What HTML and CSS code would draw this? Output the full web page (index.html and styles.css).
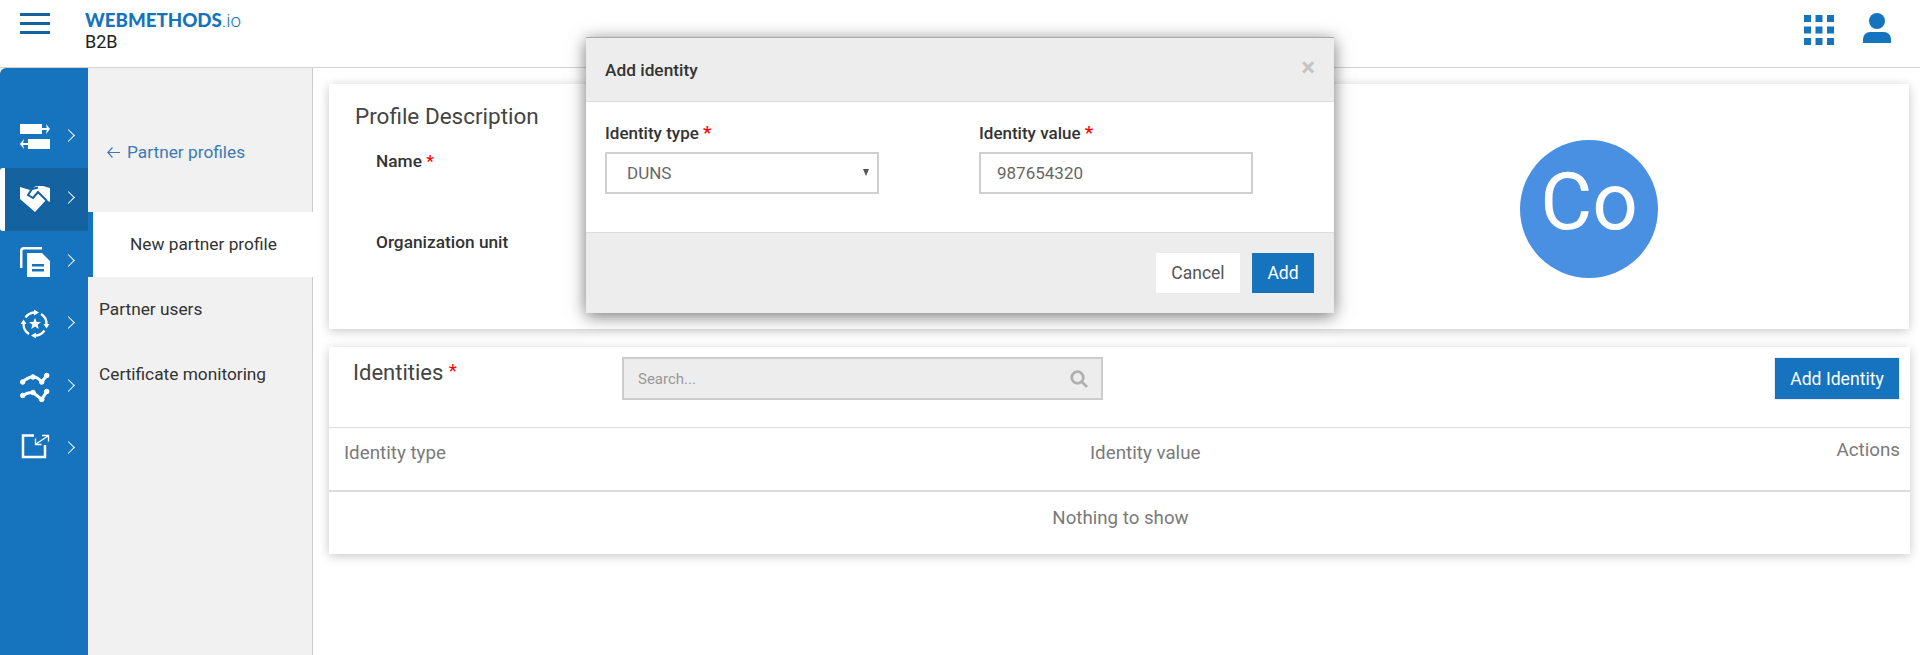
FILE: index.html
```html
<!DOCTYPE html>
<html>
<head>
  <meta name="viewport" content="width=device-width, initial-scale=1.0"/>
  <title>Add identity</title>
  <link rel="stylesheet" href="styles.css">
</head>
<body>
  <!--top bar-->
  <header class="topbar">
    <div class="burger"><span></span><span></span><span></span></div>
    <div class="brand">
      <div class="logo">WEBMETHODS<span class="logo-io">.io</span></div>
      <div class="product">B2B</div>
    </div>
    <div class="top-icons">
      <svg width="30" height="30" viewBox="0 0 30 30" fill="#1673bd">
        <rect x="0" y="0" width="7" height="7"/><rect x="11.5" y="0" width="7" height="7"/><rect x="23" y="0" width="7" height="7"/>
        <rect x="0" y="11.5" width="7" height="7"/><rect x="11.5" y="11.5" width="7" height="7"/><rect x="23" y="11.5" width="7" height="7"/>
        <rect x="0" y="23" width="7" height="7"/><rect x="11.5" y="23" width="7" height="7"/><rect x="23" y="23" width="7" height="7"/>
      </svg>
      <svg class="user-icon" width="28" height="31" viewBox="0 0 28 31" fill="#1673bd">
        <circle cx="14" cy="8" r="8"/>
        <path d="M0 30v-4a7 7 0 0 1 7-7h14a7 7 0 0 1 7 7v4z"/>
      </svg>
    </div>
  </header>

  <div class="layout">
    <!--icon rail-->
    <nav class="rail">
      <a class="rail-item">
        <svg class="up3" width="30" height="30" viewBox="0 0 30 30" fill="#fff">
          <rect x="0" y="4" width="22" height="10"/><path d="M22 8h5v2h-5zM26 4l4 5-4 5 1-5z"/>
          <rect x="8" y="19" width="22" height="10"/><path d="M8 23H3v2h5zM4 19l-4 5 4 5-1-5z"/>
        </svg>
        <span class="chev"></span>
      </a>
      <a class="rail-item active">
        <svg width="30" height="30" viewBox="0 0 30 30">
          <path fill="#fff" d="M0 3L10 6 16 2 23 2 30 4V18L26 16 15 28 0 15z"/>
          <path fill="none" stroke="#14629f" stroke-width="2" d="M18 3.500L12 5 8 11 13 14 18 8 27 17"/>
        </svg>
        <span class="chev"></span>
      </a>
      <a class="rail-item">
        <svg width="30" height="30" viewBox="0 0 30 30" fill="#fff">
          <path d="M2.500 21H0V4a4 4 0 0 1 4-4h18v2.500H4a1.500 1.500 0 0 0-1.500 1.500z"/>
          <path fill-rule="evenodd" d="M7 6h15l8 8v16H7zM12 17v2.500h12V17zM12 22v2.500h12V22z"/>
        </svg>
        <span class="chev"></span>
      </a>
      <a class="rail-item">
        <svg width="30" height="30" viewBox="0 0 30 30" fill="none" stroke="#fff" stroke-width="2.300">
          <path d="M5.500 8.500A11.500 11.500 0 0 1 14 3.500"/>
          <path d="M21 5A11.500 11.500 0 0 1 26.500 15"/>
          <path d="M24.500 21.500A11.500 11.500 0 0 1 16 26.500"/>
          <path d="M9 25A11.500 11.500 0 0 1 3.500 15"/>
          <path fill="#fff" stroke="none" d="M19 3.500L14 .5v6zM26.500 19.500L23.500 15h6zM11 26.500l5-3v6zM3.500 10.500L.5 15h6z"/>
          <path fill="#fff" stroke="none" d="M15 9l1.700 4 4.300.1-3.400 2.700 1.200 4.200-3.800-2.400-3.800 2.400 1.200-4.200-3.400-2.700 4.300-.1z"/>
        </svg>
        <span class="chev"></span>
      </a>
      <a class="rail-item">
        <svg width="30" height="30" viewBox="0 0 30 30" fill="#fff" stroke="#fff">
          <path fill="none" stroke-width="3" d="M2.700 10Q8 5 13 5T21.700 10L26.700 3.500M2.700 23.500Q8 20 13 20.500L21.700 27.500 26.700 19.500"/>
          <circle cx="2.700" cy="10" r="2.300"/><circle cx="13" cy="5" r="2.300"/><circle cx="21.700" cy="10" r="2.300"/><circle cx="26.700" cy="3.500" r="2.300"/>
          <circle cx="2.700" cy="23.500" r="2.300"/><circle cx="13" cy="20.500" r="2.300"/><circle cx="21.700" cy="27.500" r="2.300"/><circle cx="26.700" cy="19.500" r="2.300"/>
        </svg>
        <span class="chev"></span>
      </a>
      <a class="rail-item">
        <svg width="30" height="30" viewBox="0 0 30 30" fill="none" stroke="#fff" stroke-width="2.500">
          <path d="M14 1.500H3V23H25V11"/>
          <path stroke-width="1.300" d="M16 10L28 2M22 1.500h6.500V7.500M15.500 4.500V10.500H21.500"/>
        </svg>
        <span class="chev"></span>
      </a>
    </nav>

    <!--second level menu-->
    <aside class="subnav">
      <a class="back">
        <svg width="13" height="11" viewBox="0 0 13 11" fill="none" stroke="#3d7ab5" stroke-width="1.200">
          <path d="M13 5.500H1M5.500 .5L.8 5.500l4.700 5"/>
        </svg>
        Partner profiles
      </a>
      <a class="sub-item current">New partner profile</a>
      <a class="sub-item">Partner users</a>
      <a class="sub-item">Certificate monitoring</a>
    </aside>

    <main class="content">
      <section class="card profile">
        <div class="profile-form">
          <h2>Profile Description</h2>
          <div class="field-name">Name <span class="req">*</span></div>
          <div class="field-org">Organization unit</div>
        </div>
        <div class="avatar">Co</div>
      </section>

      <section class="card identities">
        <div class="id-top">
          <h2>Identities <span class="req">*</span></h2>
          <div class="search">
            <span>Search...</span>
            <svg width="18" height="18" viewBox="0 0 18 18" fill="none" stroke="#b0b0b0" stroke-width="2.800">
              <circle cx="7.500" cy="7.500" r="5.800"/><path d="M11.800 11.800L17 17"/>
            </svg>
          </div>
          <button class="btn-primary add-id">Add Identity</button>
        </div>
        <div class="id-head">
          <div class="col-type">Identity type</div>
          <div class="col-value">Identity value</div>
          <div class="col-actions">Actions</div>
        </div>
        <div class="id-empty">Nothing to show</div>
      </section>
    </main>
  </div>

  <!--dialog-->
  <div class="modal">
    <div class="modal-head">
      <span>Add identity</span>
      <span class="close">&times;</span>
    </div>
    <div class="modal-body">
      <div class="form-col">
        <label>Identity type <span class="req">*</span></label>
        <div class="input select">DUNS<span class="caret"></span></div>
      </div>
      <div class="form-col">
        <label>Identity value <span class="req">*</span></label>
        <div class="input">987654320</div>
      </div>
    </div>
    <div class="modal-foot">
      <button class="btn-plain">Cancel</button>
      <button class="btn-primary">Add</button>
    </div>
  </div>
</body>
</html>
```

FILE: styles.css
```css
* {
box-sizing: border-box;
}
html, body {
height: 100%;
}
body {
margin: 0;
background: #fff;
font-family: Roboto, "Liberation Sans", sans-serif;
font-size: 17.3px;
color: #333;
overflow: hidden;
}
h2 {
margin: 0;
font-weight: 400;
color: #444;
}
.req {
color: #f00;
}

/* top bar */
.topbar {
height: 68px;
border-bottom: 1px solid #d3d3d3;
display: flex;
padding-left: 20px;
}
.burger {
width: 30px;
padding-top: 13px;
}
.burger span {
display: block;
height: 3px;
margin-bottom: 6px;
background: #14629f;
}
.brand {
margin-left: 35px;
padding-top: 10px;
}
.logo {
font-family: Lato, sans-serif;
font-weight: 900;
font-size: 18.7px;
line-height: 21px;
color: #1673bd;
}
.logo-io {
font-family: Roboto, sans-serif;
font-weight: 300;
}
.product {
font-size: 18px;
line-height: 20px;
color: #222;
}
.top-icons {
margin-left: auto;
padding: 12px 29px 0 0;
display: flex;
align-items: flex-start;
gap: 29px;
}
.top-icons svg:first-child {
margin-top: 3px;
}
.user-icon {
margin-top: 1px;
}

/* rail */
.layout {
display: flex;
height: 587px;
}
.rail {
width: 88px;
padding-top: 37.5px;
background: #1673bd;
border-top-left-radius: 6px;
}
.rail-item {
display: flex;
align-items: center;
height: 62.5px;
padding-left: 20px;
}
.up3 {
margin-top: -3px;
}
.rail-item.active {
padding-left: 15px;
background: #14629f;
border-left: 5px solid #fff;
border-radius: 3px 0 0 3px;
}
.chev {
width: 9px;
height: 9px;
margin: -3px 0 0 14px;
border-top: 1.500px solid #fff;
border-right: 1.500px solid #fff;
transform: rotate(45deg);
}

/* second level menu */
.subnav {
width: 225px;
background: #f1f1f1;
border-right: 1px solid #ccc;
}
.back {
display: flex;
align-items: center;
gap: 7px;
height: 144px;
padding: 24px 0 0 19px;
line-height: 24px;
color: #3d7ab5;
}
.sub-item {
display: block;
height: 65px;
line-height: 65px;
padding-left: 11px;
color: #333;
}
.sub-item.current {
margin-right: -1px;
padding-left: 37px;
background: #fff;
border-left: 5px solid #1673bd;
}

/* cards */
.content {
flex: 1;
padding: 16px 10px 0 16px;
}
.card {
background: #fff;
box-shadow: 0 2px 10px rgba(0, 0, 0, 0.22);
}
.profile {
height: 245px;
margin-right: 1px;
display: flex;
}
.profile-form {
flex: 1;
padding: 19px 0 0 26px;
}
.profile-form h2 {
font-size: 22.5px;
line-height: 26px;
}
.field-name, .field-org {
margin-left: 21px;
font-weight: 500;
line-height: 20px;
}
.field-name {
margin-top: 22px;
}
.field-org {
margin-top: 61px;
}
.avatar {
width: 138px;
height: 138px;
margin: 56px 251px 0 0;
border-radius: 50%;
background: #4a90e2;
color: #fff;
font-size: 80px;
line-height: 124px;
text-align: center;
}
.identities {
margin-top: 18px;
height: 207px;
}
.id-top {
height: 81px;
border-bottom: 1px solid #ddd;
display: flex;
padding: 10px 10px 0 24px;
}
.id-top h2 {
width: 269px;
font-size: 22px;
line-height: 28px;
}
.id-top .req {
font-size: 19px;
vertical-align: 3px;
}
.search {
width: 481px;
height: 43px;
padding: 0 13px 0 14px;
background: #ededed;
border: 2px solid #ccc;
display: flex;
align-items: center;
justify-content: space-between;
font-size: 15px;
color: #999;
}
.add-id {
margin-left: auto;
width: 126px;
height: 43px;
font-size: 17.6px;
border: 1px solid #e8eef4;
}
.id-head {
height: 64px;
border-bottom: 2px solid #ddd;
display: flex;
padding: 0 10px 0 15px;
line-height: 50px;
color: #7a7a7a;
font-size: 18.8px;
}
.col-type {
width: 746px;
}
.col-actions {
margin-left: auto;
line-height: 44px;
}
.id-empty {
padding-left: 2px;
text-align: center;
line-height: 52px;
font-size: 18.7px;
color: #7a7a7a;
}

/* buttons */
button {
font-family: inherit;
font-size: 17.5px;
border: 0;
padding: 0;
}
.btn-primary {
background: #1673bd;
color: #fff;
}
.btn-plain {
background: #fff;
color: #555;
}

/* dialog */
.modal {
position: absolute;
left: 586px;
top: 37px;
width: 748px;
height: 276px;
background: #ededed;
border-top: 1px solid #aaa;
box-shadow: 0 3px 16px rgba(0, 0, 0, 0.55);
}
.modal-head {
height: 64px;
padding: 0 19px 0 19px;
border-bottom: 1px solid #ddd;
display: flex;
align-items: center;
justify-content: space-between;
font-size: 17.3px;
font-weight: 500;
}
.close {
font-size: 26px;
font-weight: 700;
color: #c4c4c4;
margin-top: -6px;
}
.modal-body {
height: 131px;
padding: 20px 19px 0;
background: #fff;
border-bottom: 1px solid #ddd;
display: flex;
gap: 100px;
}
.form-col {
width: 274px;
}
.form-col label {
display: block;
height: 30px;
line-height: 22px;
font-size: 17px;
font-weight: 500;
}
.form-col .req {
font-size: 19px;
}
.input {
height: 42px;
line-height: 38px;
padding-left: 16px;
border: 2px solid #d0d0d0;
color: #666;
font-size: 17px;
}
.select {
padding-left: 20px;
position: relative;
}
.caret {
position: absolute;
right: 8px;
top: 15px;
border-left: 3.500px solid transparent;
border-right: 3.500px solid transparent;
border-top: 7px solid #555;
}
.modal-foot {
display: flex;
justify-content: flex-end;
gap: 12px;
padding: 20px 20px 0 0;
}
.modal-foot button {
height: 40px;
}
.btn-plain {
width: 84px;
}
.modal-foot .btn-primary {
width: 62px;
}
```
